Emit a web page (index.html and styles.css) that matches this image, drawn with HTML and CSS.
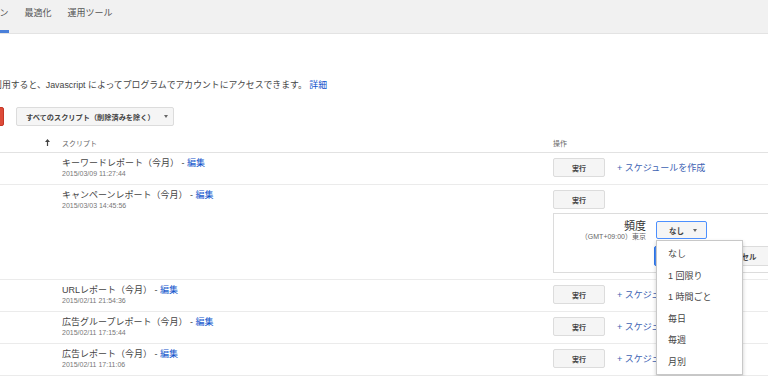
FILE: index.html
```html
<!DOCTYPE html>
<html lang="ja">
<head>
  <meta charset="UTF-8" />
  <meta name="viewport" content="width=device-width, initial-scale=1.0"/>
  <title>スクリプト</title>
  <link rel="stylesheet" href="styles.css">
</head>
<body>
  <div class="tabs">
    <a class="tab active" href="#">キャンペーン</a>
    <a class="tab" href="#">最適化</a>
    <a class="tab" href="#">運用ツール</a>
  </div>

  <p class="intro">スクリプトを利用すると、Javascript によってプログラムでアカウントにアクセスできます。 <a href="#">詳細</a></p>

  <div class="toolbar">
    <button class="btn-red">+ スクリプト</button>
    <button class="btn filter">すべてのスクリプト（削除済みを除く）<span class="caret"></span></button>
  </div>

  <div class="table">
    <div class="row head">
      <div class="sort">
        <svg width="5" height="7" viewBox="0 0 5 7"><path d="M2.5 0 L5 3 H3.1 V7 H1.9 V3 H0 Z" fill="#444"/></svg>
      </div>
      <div class="name">スクリプト</div>
      <div class="ops">操作</div>
    </div>

    <div class="row">
      <div class="sort"></div>
      <div class="name">
        <div class="title">キーワードレポート（今月） - <a href="#">編集</a></div>
        <div class="date">2015/03/09 11:27:44</div>
      </div>
      <div class="ops">
        <div class="ops-line"><button class="btn run">実行</button><a class="sched-link" href="#">+ スケジュールを作成</a></div>
      </div>
    </div>

    <div class="row">
      <div class="sort"></div>
      <div class="name">
        <div class="title">キャンペーンレポート（今月） - <a href="#">編集</a></div>
        <div class="date">2015/03/03 14:45:56</div>
      </div>
      <div class="ops">
        <div class="ops-line"><button class="btn run">実行</button></div>
        <div class="schedule">
          <div class="sched-label">
            <div class="freq">頻度</div>
            <div class="tz">（GMT+09:00）東京</div>
          </div>
          <div class="sched-ctrl">
            <div class="select-wrap">
              <button class="btn select">なし<span class="caret"></span></button>
              <ul class="menu">
                <li>なし</li>
                <li>1 回限り</li>
                <li>1 時間ごと</li>
                <li>毎日</li>
                <li>毎週</li>
                <li>月別</li>
              </ul>
            </div>
            <div class="sched-actions">
              <button class="btn-blue">保存</button>
              <button class="btn cancel">キャンセル</button>
            </div>
          </div>
        </div>
      </div>
    </div>

    <div class="row">
      <div class="sort"></div>
      <div class="name">
        <div class="title">URLレポート（今月） - <a href="#">編集</a></div>
        <div class="date">2015/02/11 21:54:36</div>
      </div>
      <div class="ops">
        <div class="ops-line"><button class="btn run">実行</button><a class="sched-link" href="#">+ スケジュールを作成</a></div>
      </div>
    </div>

    <div class="row">
      <div class="sort"></div>
      <div class="name">
        <div class="title">広告グループレポート（今月） - <a href="#">編集</a></div>
        <div class="date">2015/02/11 17:15:44</div>
      </div>
      <div class="ops">
        <div class="ops-line"><button class="btn run">実行</button><a class="sched-link" href="#">+ スケジュールを作成</a></div>
      </div>
    </div>

    <div class="row">
      <div class="sort"></div>
      <div class="name">
        <div class="title">広告レポート（今月） - <a href="#">編集</a></div>
        <div class="date">2015/02/11 17:11:06</div>
      </div>
      <div class="ops">
        <div class="ops-line"><button class="btn run">実行</button><a class="sched-link" href="#">+ スケジュールを作成</a></div>
      </div>
    </div>
  </div>
</body>
</html>
```

FILE: styles.css
```css
html, body {
  overflow: hidden;
}
body {
  margin: 0;
  background: #fff;
  color: #444;
  font-family: "Liberation Sans", "Noto Sans CJK JP", sans-serif;
  font-size: 9px;
}
a {
  color: #15c;
  text-decoration: none;
}
button {
  font-family: inherit;
  cursor: pointer;
}

.tabs {
  display: flex;
  gap: 16px;
  height: 34px;
  box-sizing: border-box;
  background: #f1f1f1;
  border-bottom: 1px solid #e3e3e3;
}
.tab {
  color: #555;
  line-height: 26px;
}
.tab.active {
  margin-left: -45px;
  box-shadow: inset 0 -3px 0 #4a7fd9;
}

.intro {
  margin: 44px 0 0 -60px;
  line-height: 14px;
  font-size: 8.85px;
  white-space: nowrap;
}

.toolbar {
  display: flex;
  gap: 12px;
  margin-top: 15px;
}
.btn {
  height: 19px;
  box-sizing: border-box;
  background: #f5f5f5;
  border: 1px solid #dcdcdc;
  border-radius: 2px;
  color: #444;
  font-size: 7px;
  font-weight: bold;
  padding: 0;
}
.btn-red {
  width: 54px;
  height: 19px;
  margin-left: -50px;
  background: #dd4b39;
  border: 1px solid #c53727;
  border-radius: 2px;
  color: #fff;
  font-size: 7px;
  font-weight: bold;
}
.filter {
  width: 158px;
  display: flex;
  align-items: center;
  padding-left: 9px;
  font-size: 7.2px;
}
.caret {
  display: inline-block;
  margin-left: 9px;
  border-left: 2.5px solid transparent;
  border-right: 2.5px solid transparent;
  border-top: 3px solid #666;
}

.table {
  margin-top: 7px;
}
.row {
  display: grid;
  grid-template-columns: 62px 491px 260px;
  padding: 5px 0 6px;
  border-bottom: 1px solid #ebebeb;
}
.row.head {
  padding: 0;
  height: 19px;
  align-items: center;
  border-bottom-color: #e2e2e2;
  color: #666;
  font-size: 7px;
}
.sort {
  display: flex;
  justify-content: flex-end;
  padding-right: 12px;
}
.title {
  line-height: 11px;
}
.date {
  color: #777;
  font-size: 7px;
  line-height: 9px;
}

.ops-line {
  display: flex;
  align-items: center;
  gap: 12px;
}
.run {
  width: 52px;
}
.sched-link {
  color: #3d62b3;
}

.schedule {
  position: relative;
  width: 260px;
  height: 60px;
  box-sizing: border-box;
  margin-top: 4px;
  padding-top: 6px;
  border: 1px solid #dcdcdc;
  display: grid;
  grid-template-columns: 92px auto;
  column-gap: 10px;
}
.sched-label {
  text-align: right;
}
.freq {
  color: #333;
  font-size: 11px;
  line-height: 12px;
}
.tz {
  color: #666;
  font-size: 7px;
  line-height: 9px;
}
.select-wrap {
  position: relative;
  width: 51px;
  margin-top: 1px;
}
.select {
  width: 51px;
  height: 18px;
  display: flex;
  align-items: center;
  padding-left: 12px;
  border-color: #4d90fe;
  font-size: 7.5px;
}
.menu {
  position: absolute;
  top: 19px;
  left: 0;
  z-index: 10;
  width: 87px;
  box-sizing: border-box;
  margin: 0;
  padding: 3px 0 1px;
  list-style: none;
  background: #fff;
  border: 1px solid #c8c8c8;
  box-shadow: 0 2px 4px rgba(0,0,0,0.2);
}
.menu li {
  padding-left: 11px;
  line-height: 21.5px;
  color: #444;
}
.sched-actions {
  display: flex;
  gap: 6px;
  margin-top: 7px;
}
.btn-blue {
  width: 46px;
  height: 20px;
  margin-left: -2px;
  background: #4d90fe;
  border: 1px solid #3079ed;
  border-radius: 2px;
  color: #fff;
  font-size: 7.5px;
  font-weight: bold;
}
.cancel {
  height: 20px;
  padding: 0 12px;
  font-size: 7.5px;
}
```
